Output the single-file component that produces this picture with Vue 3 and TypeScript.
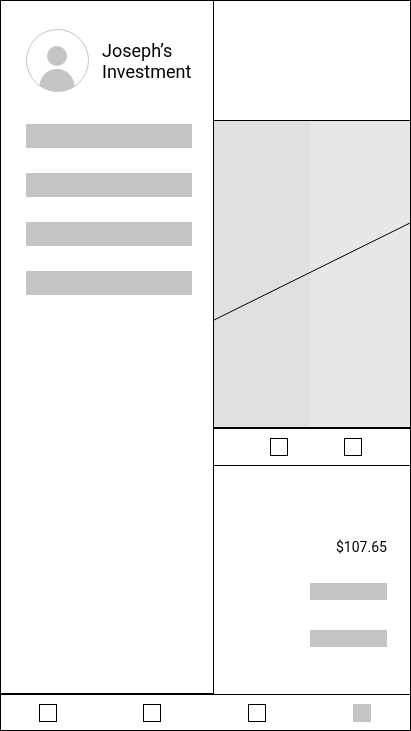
<script setup lang="ts">
const menuItems: number[] = [1, 2, 3, 4]
const navItems = [false, false, false, true]
</script>

<template>
  <div class="screen">
    <div class="main">
      <aside class="drawer">
        <div class="profile">
          <svg class="avatar" width="63" height="63" viewBox="0 0 63 63">
            <defs>
              <clipPath id="avatar-clip"><circle cx="31.5" cy="31.5" r="31" /></clipPath>
            </defs>
            <g clip-path="url(#avatar-clip)" fill="#c4c4c4">
              <circle cx="31" cy="27" r="10" />
              <ellipse cx="31" cy="57.5" rx="17.5" ry="17.5" />
            </g>
            <circle cx="31.5" cy="31.5" r="31" fill="none" stroke="#c4c4c4" stroke-width="1" />
          </svg>
          <div class="name">Joseph’s<br />Investment</div>
        </div>
        <div class="menu">
          <div v-for="item in menuItems" :key="item" class="menu-bar"></div>
        </div>
      </aside>
      <section class="content">
        <div class="top"></div>
        <div class="chart">
          <div class="band"></div>
          <svg class="line" width="196" height="306" viewBox="0 0 196 306">
            <line x1="0" y1="199" x2="196" y2="102" stroke="#000" stroke-width="1" />
          </svg>
        </div>
        <div class="tabs">
          <span class="box"></span>
          <span class="box"></span>
        </div>
        <div class="details">
          <div class="price">$107.65</div>
          <div class="small-bar first"></div>
          <div class="small-bar second"></div>
        </div>
      </section>
    </div>
    <nav class="nav">
      <span v-for="(filled, i) in navItems" :key="i" class="box" :class="{ filled }"></span>
    </nav>
  </div>
</template>

<style>
html, body { margin: 0; padding: 0; background: #fff; }
</style>

<style scoped>
.screen {
  box-sizing: border-box;
  width: 411px;
  height: 731px;
  border: 1px solid #000;
  display: flex;
  flex-direction: column;
  background: #fff;
  font-family: Roboto, sans-serif;
  color: #000;
  overflow: hidden;
}
.main {
  display: flex;
  height: 694px;
  flex: none;
  border-bottom: 1px solid #000;
  box-sizing: border-box;
}
.drawer {
  box-sizing: border-box;
  width: 213px;
  height: 693px;
  border-right: 1px solid #000;
  border-bottom: 1px solid #000;
  padding: 28px 21px 0 25px;
  flex: none;
}
.profile {
  display: flex;
  align-items: center;
  gap: 13px;
  height: 63px;
}
.avatar { display: block; flex: none; }
.name {
  font-size: 18px;
  line-height: 21px;
  white-space: nowrap;
  will-change: transform;
}
.menu {
  display: flex;
  flex-direction: column;
  gap: 25px;
  margin-top: 32px;
}
.menu-bar { height: 24px; background: #c4c4c4; }
.content {
  flex: 1;
  min-width: 0;
  display: flex;
  flex-direction: column;
}
.top {
  height: 120px;
  box-sizing: border-box;
  border-bottom: 1px solid #000;
  flex: none;
}
.chart {
  position: relative;
  height: 306px;
  flex: none;
  background: #e7e7e7;
  border-bottom: 2px solid #000;
}
.band { width: 96px; height: 100%; background: #e0e0e0; }
.line { position: absolute; left: 0; top: 0; display: block; }
.tabs {
  box-sizing: border-box;
  height: 37px;
  flex: none;
  display: flex;
  justify-content: flex-end;
  align-items: center;
  gap: 56px;
  padding-right: 48px;
  border-bottom: 1px solid #000;
}
.box {
  box-sizing: border-box;
  display: block;
  width: 18px;
  height: 18px;
  border: 1px solid #000;
  flex: none;
}
.box.filled { background: #c4c4c4; border-color: #c4c4c4; }
.details {
  flex: 1;
  display: flex;
  flex-direction: column;
  align-items: flex-end;
  padding: 73px 23px 0 0;
}
.price { font-size: 14px; line-height: 16px; will-change: transform; }
.small-bar { width: 77px; height: 17px; background: #c4c4c4; }
.small-bar.first { margin-top: 28px; }
.small-bar.second { margin-top: 30px; }
.nav {
  flex: 1;
  display: flex;
  align-items: center;
  gap: 86.65px;
  padding-left: 37.7px;
}
</style>
